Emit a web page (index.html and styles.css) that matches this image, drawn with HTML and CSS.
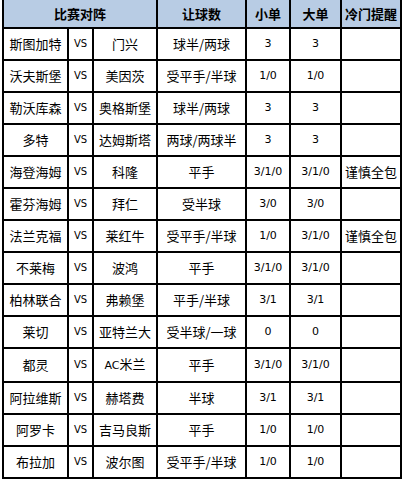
FILE: index.html
```html
<!DOCTYPE html>
<html lang="zh-CN">
<head>
<meta charset="utf-8">
<title>比赛对阵</title>
<link rel="stylesheet" href="styles.css">
</head>
<body>
<table class="grid">
  <colgroup>
    <col class="c1"><col class="c2"><col class="c3"><col class="c4"><col class="c5"><col class="c6"><col class="c7">
  </colgroup>
  <thead>
    <tr>
      <th colspan="3">比赛对阵</th>
      <th>让球数</th>
      <th>小单</th>
      <th>大单</th>
      <th>冷门提醒</th>
    </tr>
  </thead>
  <tbody>
    <tr><td>斯图加特</td><td class="vs">VS</td><td>门兴</td><td>球半/两球</td><td class="num">3</td><td class="num">3</td><td></td></tr>
    <tr><td>沃夫斯堡</td><td class="vs">VS</td><td>美因茨</td><td>受平手/半球</td><td class="num">1/0</td><td class="num">1/0</td><td></td></tr>
    <tr><td>勒沃库森</td><td class="vs">VS</td><td>奥格斯堡</td><td>球半/两球</td><td class="num">3</td><td class="num">3</td><td></td></tr>
    <tr><td>多特</td><td class="vs">VS</td><td>达姆斯塔</td><td>两球/两球半</td><td class="num">3</td><td class="num">3</td><td></td></tr>
    <tr><td>海登海姆</td><td class="vs">VS</td><td>科隆</td><td>平手</td><td class="num">3/1/0</td><td class="num">3/1/0</td><td>谨慎全包</td></tr>
    <tr><td>霍芬海姆</td><td class="vs">VS</td><td>拜仁</td><td>受半球</td><td class="num">3/0</td><td class="num">3/0</td><td></td></tr>
    <tr><td>法兰克福</td><td class="vs">VS</td><td>莱红牛</td><td>受平手/半球</td><td class="num">1/0</td><td class="num">3/1/0</td><td>谨慎全包</td></tr>
    <tr><td>不莱梅</td><td class="vs">VS</td><td>波鸿</td><td>平手</td><td class="num">3/1/0</td><td class="num">3/1/0</td><td></td></tr>
    <tr><td>柏林联合</td><td class="vs">VS</td><td>弗赖堡</td><td>平手/半球</td><td class="num">3/1</td><td class="num">3/1</td><td></td></tr>
    <tr><td>莱切</td><td class="vs">VS</td><td>亚特兰大</td><td>受半球/一球</td><td class="num">0</td><td class="num">0</td><td></td></tr>
    <tr><td>都灵</td><td class="vs">VS</td><td><span class="lat">AC</span>米兰</td><td>平手</td><td class="num">3/1/0</td><td class="num">3/1/0</td><td></td></tr>
    <tr><td>阿拉维斯</td><td class="vs">VS</td><td>赫塔费</td><td>半球</td><td class="num">3/1</td><td class="num">3/1</td><td></td></tr>
    <tr><td>阿罗卡</td><td class="vs">VS</td><td>吉马良斯</td><td>平手</td><td class="num">1/0</td><td class="num">1/0</td><td></td></tr>
    <tr><td>布拉加</td><td class="vs">VS</td><td>波尔图</td><td>受平手/半球</td><td class="num">1/0</td><td class="num">1/0</td><td></td></tr>
  </tbody>
</table>
</body>
</html>
```

FILE: styles.css
```css
html, body {
  margin: 0;
  padding: 0;
  background: #ffffff;
}

body {
  padding-left: 2px;
  font-family: "Noto Sans CJK SC", "Noto Sans", sans-serif;
  color: #000;
}

.grid {
  border-collapse: separate;
  border-spacing: 0;
  table-layout: fixed;
  width: 400px;
  border-left: 2px solid #000;
}

.c1 { width: 65px; }
.c2 { width: 25px; }
.c3 { width: 64px; }
.c4 { width: 89px; }
.c5 { width: 44px; }
.c6 { width: 51px; }
.c7 { width: 60px; }

.grid th,
.grid td {
  padding: 0;
  border-right: 2px solid #000;
  border-bottom: 2px solid #000;
  text-align: center;
  vertical-align: middle;
  white-space: nowrap;
  overflow: hidden;
}

.grid th {
  height: 27px;
  background: #b8cce4;
  font-size: 13px;
  font-weight: bold;
  line-height: 27px;
}

.grid td {
  height: 30px;
  font-size: 13px;
  line-height: 30px;
}

.grid td.vs {
  font-family: "DejaVu Sans", "Liberation Sans", sans-serif;
  font-size: 10px;
}

.grid td.num {
  font-family: "DejaVu Sans", "Liberation Sans", sans-serif;
  font-size: 11px;
}

.lat {
  font-family: "DejaVu Sans", "Liberation Sans", sans-serif;
  font-size: 11px;
}
```
